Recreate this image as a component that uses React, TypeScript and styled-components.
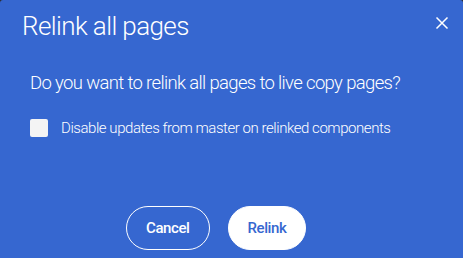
import React from "react";
import styled, { createGlobalStyle } from "styled-components";

const Global = createGlobalStyle`
  html, body { margin: 0; padding: 0; background: #2b2b2b; }
  body { font-family: Roboto, "Noto Sans", sans-serif; }
`;

const Dialog = styled.div`
  width: 463px;
  height: 258px;
  box-sizing: border-box;
  background: #3667d0;
  color: #ffffff;
  border-radius: 3px 3px 0 0;
  display: flex;
  flex-direction: column;
`;

const Header = styled.div`
  display: flex;
  align-items: flex-start;
  justify-content: space-between;
  padding: 10px 14px 0 22px;
  height: 58px;
  box-sizing: border-box;
`;

const Title = styled.h1`
  margin: 0;
  font-size: 26px;
  font-weight: 300;
  line-height: 32px;
  letter-spacing: -0.6px;
`;

const CloseButton = styled.button`
  background: none;
  border: none;
  padding: 0;
  margin-top: 6px;
  width: 14px;
  height: 14px;
  cursor: pointer;
  display: flex;
`;

const Body = styled.div`
  padding: 13px 0 0 30px;
  display: flex;
  flex-direction: column;
  gap: 23px;
`;

const Question = styled.p`
  margin: 0;
  font-size: 18.5px;
  font-weight: 300;
  line-height: 24px;
  letter-spacing: -0.65px;
`;

const CheckRow = styled.label`
  display: flex;
  align-items: center;
  gap: 13px;
  font-size: 15px;
  font-weight: 300;
  line-height: 20px;
  letter-spacing: -0.45px;
`;

const Box = styled.span`
  width: 18px;
  height: 18px;
  border-radius: 2px;
  background: #f4f4f4;
  flex: none;
`;

const Footer = styled.div`
  margin-top: auto;
  padding: 0 0 8px 126px;
  display: flex;
  gap: 18px;
`;

const Pill = styled.button<{ $primary?: boolean }>`
  height: 44px;
  border-radius: 22px;
  padding: 0 19px;
  font-family: Roboto, sans-serif;
  font-size: 15px;
  font-weight: 500;
  letter-spacing: -0.4px;
  border: 1px solid #ffffff;
  background: ${(p) => (p.$primary ? "#ffffff" : "transparent")};
  color: ${(p) => (p.$primary ? "#3667d0" : "#ffffff")};
  cursor: pointer;
`;

export default function App() {
  return (
    <>
      <Global />
      <Dialog>
        <Header>
          <Title>Relink all pages</Title>
          <CloseButton aria-label="Close">
            <svg width="14" height="14" viewBox="0 0 14 14">
              <path d="M1.5 1.5 L12.5 12.5 M12.5 1.5 L1.5 12.5" stroke="#fff" strokeWidth="1.5" />
            </svg>
          </CloseButton>
        </Header>
        <Body>
          <Question>Do you want to relink all pages to live copy pages?</Question>
          <CheckRow>
            <Box />
            Disable updates from master on relinked components
          </CheckRow>
        </Body>
        <Footer>
          <Pill>Cancel</Pill>
          <Pill $primary>Relink</Pill>
        </Footer>
      </Dialog>
    </>
  );
}
